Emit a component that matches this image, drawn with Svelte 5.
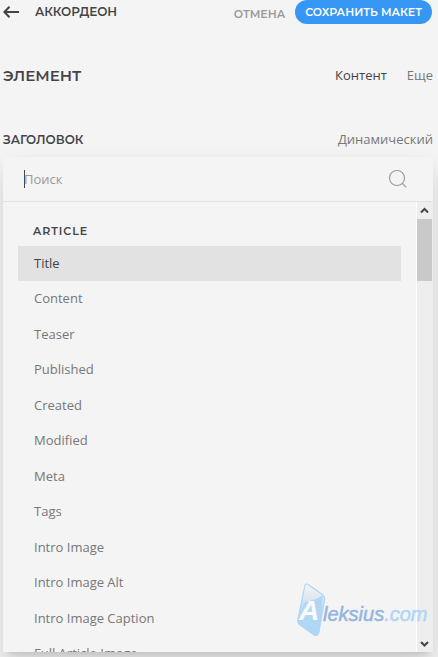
<script>
	const fields = [
		'Title',
		'Content',
		'Teaser',
		'Published',
		'Created',
		'Modified',
		'Meta',
		'Tags',
		'Intro Image',
		'Intro Image Alt',
		'Intro Image Caption',
		'Full Article Image'
	];

	let selected = $state('Title');
	let query = $state('');

	/** @type {HTMLInputElement} */
	let searchInput;

	let visibleFields = $derived(
		fields.filter((field) => field.toLowerCase().includes(query.trim().toLowerCase()))
	);
</script>

<div class="panel">
	<header class="topbar">
		<button type="button" class="back" aria-label="Назад">
			<svg width="16" height="12" viewBox="0 0 16 12" fill="none" stroke="#444448" stroke-width="2">
				<path d="M6.5 0.8 1.4 6l5.1 5.2M1.5 6H16" />
			</svg>
		</button>
		<h1>АККОРДЕОН</h1>
		<button type="button" class="cancel">ОТМЕНА</button>
		<button type="button" class="save">СОХРАНИТЬ МАКЕТ</button>
	</header>

	<div class="section">
		<h2>ЭЛЕМЕНТ</h2>
		<nav>
			<a href="#content" class="active">Контент</a>
			<a href="#more">Еще</a>
		</nav>
	</div>

	<div class="field">
		<h3>ЗАГОЛОВОК</h3>
		<a href="#dynamic">Динамический</a>
	</div>

	<div class="dropdown">
		<div class="search">
			{#if !query}<span class="caret"></span>{/if}
			<input
				type="text"
				placeholder="Поиск"
				aria-label="Поиск"
				bind:value={query}
				bind:this={searchInput}
			/>
			<button type="button" aria-label="Найти" onclick={() => searchInput.focus()}>
				<svg width="20" height="20" viewBox="0 0 20 20" fill="none" stroke="#999" stroke-width="1.1">
					<circle cx="9" cy="9" r="7.5" />
					<path d="M14 14l4.3 4.3" />
				</svg>
			</button>
		</div>

		<div class="results">
			<div class="list">
				<h4>ARTICLE</h4>
				<ul>
					{#each visibleFields as field}
						<li>
							<button
								type="button"
								class:selected={field === selected}
								onclick={() => (selected = field)}
							>
								{field}
							</button>
						</li>
					{/each}
				</ul>
			</div>
			<div class="scrollbar" aria-hidden="true">
				<svg width="15" height="17" viewBox="0 0 15 17" fill="none" stroke="#444" stroke-width="2">
					<path d="M4 10.5 7.5 7l3.5 3.5" />
				</svg>
				<div class="thumb"></div>
				<svg width="15" height="17" viewBox="0 0 15 17" fill="none" stroke="#444" stroke-width="2">
					<path d="M4 7l3.5 3.5L11 7" />
				</svg>
			</div>
		</div>
	</div>

	<svg class="logo" width="134" height="56" viewBox="0 0 134 56" aria-label="Aleksius.com">
		<defs>
			<linearGradient id="tile" x1="0" y1="0" x2="0" y2="1">
				<stop offset="0" stop-color="#f2f4f6" />
				<stop offset="0.3" stop-color="#dce6ef" />
				<stop offset="0.5" stop-color="#b4d8f5" />
				<stop offset="1" stop-color="#afd6f5" />
			</linearGradient>
		</defs>
		<path
			d="M8 2Q9 0 12 2L26 12Q28 14 27.5 17L22 49Q21 54 17 52L3 42Q0 40 1 36Z"
			fill="url(#tile)"
			stroke="#afd6f5"
			stroke-width="1.2"
		/>
		<path d="M8 19Q20 17 26 12L23 36Q14 24 6 25Z" fill="#b1d7f5" />
		<text x="2" y="37" class="initial">A</text>
		<text x="26" y="38" class="name">leksius<tspan class="domain">.com</tspan></text>
	</svg>
</div>

<style>
	:global(body) {
		background: #f4f4f4;
	}

	.panel {
		position: relative;
		display: flex;
		flex-direction: column;
		box-sizing: border-box;
		height: 100vh;
		padding: 0 5px 5px 3px;
		overflow: hidden;
		background: #f4f4f4;
		color: #444448;
		font-family: 'Open Sans', 'Noto Sans', sans-serif;
		font-size: 13px;
		line-height: 1.5;
	}

	button {
		margin: 0;
		padding: 0;
		border: 0;
		background: none;
		color: inherit;
		font: inherit;
		cursor: pointer;
	}

	h1,
	h2,
	h3,
	h4 {
		margin: 0;
		font-family: Montserrat, Inter, sans-serif;
		font-weight: 600;
	}

	a {
		color: #777;
		text-decoration: none;
	}

	a.active {
		color: #444448;
	}

	.topbar {
		display: flex;
		align-items: center;
		height: 24px;
	}

	.back {
		display: flex;
		margin-right: 16px;
	}

	h1 {
		flex: 1;
		font-size: 12px;
	}

	.cancel,
	.save {
		font-family: Montserrat, Inter, sans-serif;
		font-size: 11px;
		font-weight: 600;
	}

	.cancel {
		padding-top: 4px;
		color: #999;
	}

	.save {
		height: 24px;
		margin: 0 1px 0 10px;
		padding: 0 10px;
		border-radius: 12px;
		background: #3696f3;
		color: #fff;
	}

	.section,
	.field {
		display: flex;
		justify-content: space-between;
		align-items: center;
	}

	.section {
		height: 24px;
		margin-top: 40px;
	}

	.section h2 {
		font-size: 15px;
	}

	nav {
		display: flex;
		gap: 20px;
	}

	.field {
		height: 20px;
		margin-top: 42px;
	}

	.field h3 {
		font-size: 12px;
	}

	.dropdown {
		display: flex;
		flex: 1;
		flex-direction: column;
		min-height: 0;
		margin-top: 7px;
		background: #f4f4f4;
		box-shadow:
			0 14px 25px rgba(0, 0, 0, 0.15),
			0 8px 4px -5px rgba(0, 0, 0, 0.07);
	}

	.search {
		display: flex;
		align-items: center;
		height: 44px;
		padding: 0 25px 0 21px;
		border-bottom: 1px solid #e2e2e2;
	}

	.caret {
		width: 1px;
		height: 18px;
		margin-right: -1px;
		background: #444448;
	}

	.search input {
		flex: 1;
		min-width: 0;
		padding: 2px 0 0;
		border: 0;
		outline: 0;
		background: none;
		color: #444448;
		font: inherit;
	}

	.search input::placeholder {
		color: #999;
		opacity: 1;
	}

	.search button {
		display: flex;
	}

	.results {
		display: flex;
		flex: 1;
		min-height: 0;
	}

	.list {
		flex: 1;
		padding: 21px 15px 0;
		overflow: hidden;
	}

	h4 {
		padding: 0 15px 6px;
		font-size: 11px;
		letter-spacing: 1px;
	}

	ul {
		margin: 0;
		padding: 0;
		list-style: none;
	}

	li button {
		display: block;
		width: 100%;
		padding: 8px 16px;
		color: #777;
		text-align: left;
	}

	li button.selected {
		background: #e2e2e2;
		color: #444448;
	}

	.scrollbar {
		display: flex;
		flex-direction: column;
		padding-right: 1px;
		border-left: 1px solid #fff;
		background: #eee;
	}

	.thumb {
		height: 62px;
		margin-bottom: auto;
		background: #c9c9c9;
	}

	.logo {
		position: absolute;
		right: 7px;
		bottom: 18px;
	}

	.initial,
	.name {
		font-family: 'Liberation Sans', Arial, sans-serif;
		font-style: italic;
	}

	.initial {
		fill: #fafafa;
		font-size: 28px;
		font-weight: 700;
	}

	.name {
		fill: #94b5df;
		stroke: #94b5df;
		stroke-width: 0.5;
		font-size: 20px;
	}

	.domain {
		fill: #afd6f5;
		stroke: #afd6f5;
	}
</style>
